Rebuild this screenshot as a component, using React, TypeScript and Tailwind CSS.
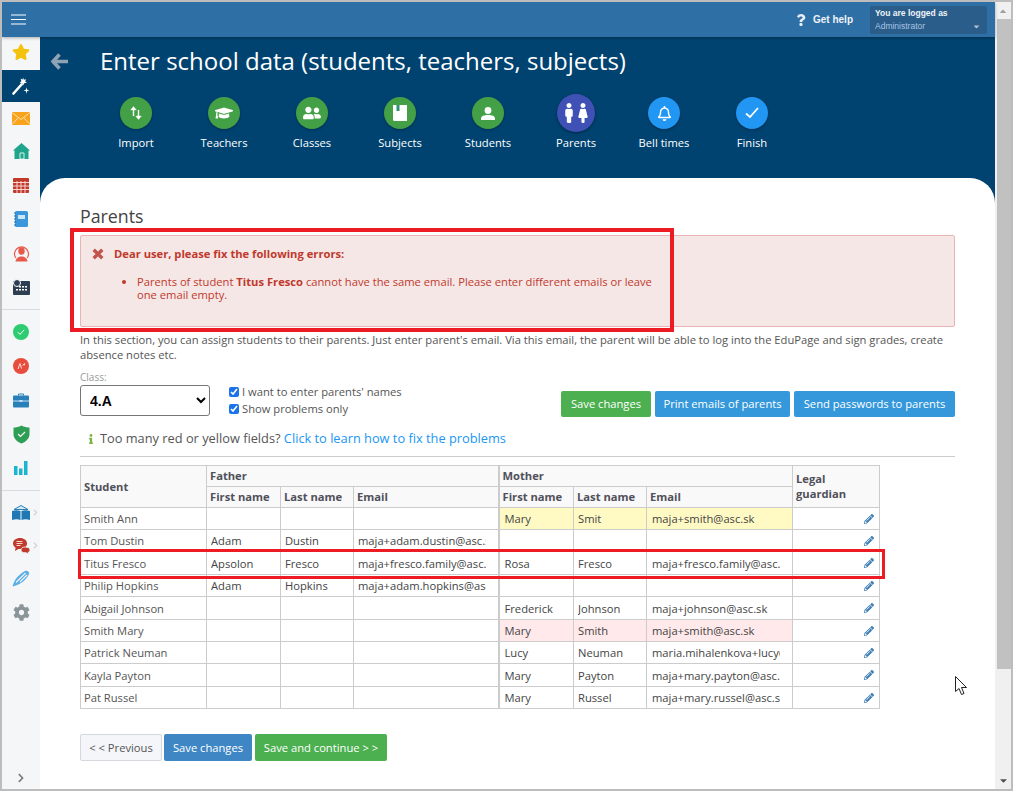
import React from "react";
import { FaStar, FaCog, FaChevronRight, FaGraduationCap, FaUserFriends, FaMale, FaFemale, FaRegBell, FaPencilAlt, FaInfo, FaQuestion, FaCaretDown, FaCaretUp } from "react-icons/fa";

const Shield = () => (
  <svg width="17" height="19" viewBox="0 0 17 19"><path d="M8.500 0.500C11 2 14 2.600 16.500 2.600V9c0 4.500-3.500 7.800-8 9.500C4 16.800.5 13.500.5 9V2.600C3 2.600 6 2 8.500.5z" fill="#2e9e55" /><path d="M5 9l2.500 2.500L12 7" stroke="#fff" strokeWidth="1.100" fill="none" /></svg>
);
const GridCal = () => (
  <svg width="16" height="15" viewBox="0 0 16 15"><rect width="16" height="15" fill="#c0392b" rx="1" /><g stroke="#f6d5cf" strokeWidth="1"><path d="M0 4.500h16M0 8h16M0 11.500h16M4 3v12M8 3v12M12 3v12" /></g></svg>
);
const Notebook = () => (
  <svg width="14" height="16" viewBox="0 0 14 16"><rect x="1" width="13" height="16" rx="1.500" fill="#3a97dc" /><rect x="4" y="4" width="7" height="4" fill="#cfe6f7" /><path d="M0 2h2M0 5h2M0 8h2M0 11h2M0 14h2" stroke="#1f6fa8" /></svg>
);
const PersonRing = () => (
  <svg width="17" height="17" viewBox="0 0 17 17"><path d="M2.800 13A7 7 0 1114.200 13" fill="none" stroke="#e8594a" strokeWidth="1.200" /><ellipse cx="8.500" cy="6" rx="3.200" ry="3.800" fill="#e8594a" /><path d="M2.500 16.500c.5-3.500 3-5 6-5s5.500 1.500 6 5z" fill="#e8594a" /></svg>
);
const DarkCal = () => (
  <svg width="17" height="16" viewBox="0 0 17 16"><rect y="2" width="17" height="14" rx="1" fill="#2c3e50" /><circle cx="4" cy="4" r="3.500" fill="#2c3e50" stroke="#fff" /><g fill="#fff"><rect x="6" y="7" width="2" height="1.500" /><rect x="9" y="7" width="2" height="1.500" /><rect x="12" y="7" width="2" height="1.500" /><rect x="6" y="10" width="2" height="1.500" /><rect x="9" y="10" width="2" height="1.500" /><rect x="12" y="10" width="2" height="1.500" /><rect x="3" y="10" width="2" height="1.500" /></g></svg>
);
const CheckDot = () => (
  <svg width="16" height="16" viewBox="0 0 16 16"><circle cx="8" cy="8" r="8" fill="#2ecc71" /><path d="M4.800 8.200l2.200 2.200 4.200-4.600" stroke="#fff" strokeWidth="1" fill="none" /></svg>
);
const GradeDot = () => (
  <svg width="16" height="16" viewBox="0 0 16 16"><circle cx="8" cy="8" r="8" fill="#e74c3c" /><path d="M5 11l2-5.500 1.500 5M9.500 7.500l2-2M11 7.500l.8-2" stroke="#fdd" strokeWidth="1" fill="none" /></svg>
);
const Briefcase = () => (
  <svg width="16" height="15" viewBox="0 0 16 15"><path d="M5.500 2.500V1h5v1.500" stroke="#2980b9" fill="none" /><rect y="2.500" width="16" height="12" rx="1" fill="#2980b9" /><path d="M0 8h16" stroke="#bfe0f5" /><rect x="6.500" y="7" width="3" height="2" fill="#bfe0f5" /></svg>
);
const Bars = () => (
  <svg width="14" height="14" viewBox="0 0 14 14" fill="#1cb5cf"><rect y="5" width="3.500" height="9" /><rect x="5" y="7.500" width="3.500" height="6.500" /><rect x="10" width="3.500" height="14" /></svg>
);
const House = () => (
  <svg width="17" height="16" viewBox="0 0 17 16"><path d="M8.500 0L17 7.500h-1.500V16h-14V7.500H0z" fill="#1fa58c" /><path d="M7 10h4v6H7z" fill="none" stroke="#d5f0ea" /></svg>
);
const BookCap = () => (
  <svg width="18" height="16" viewBox="0 0 18 16"><path d="M9 .5L16 4.500H2z" fill="#d7e9f5" stroke="#2980b9" /><path d="M0 6c3-1 6-1 8.500 0v9C6 14 3 14 0 15zM18 6c-3-1-6-1-8.500 0v9c2.500-1 5.500-1 8.500 0z" fill="#1f78b4" /></svg>
);
const Wand = () => (
  <svg width="18" height="18" viewBox="0 0 18 18"><path d="M1.500 16.500L9.500 7.500" stroke="#fff" strokeWidth="2.600" strokeLinecap="round" /><path d="M11 .5l.9 2.200 2.300-.4-1 2.100 1.700 1.500-2.400.2L11 8.500l-.9-2.400-2.400-.4 1.700-1.700-.9-2.200 2.200.7zM14.500 10.500l.7 2.300 2.300.6-2.300.7-.7 2.600-.7-2.600-2.300-.7 2.300-.6z" fill="#fff" /></svg>
);
const Mail = () => (
  <svg width="18" height="13" viewBox="0 0 18 13"><rect width="18" height="13" fill="#f9a21b" /><path d="M0 .5l9 7 9-7M0 12.500l6.500-7M18 12.500l-6.500-7" stroke="#fde2b0" strokeWidth="1" fill="none" /></svg>
);
const Chat = () => (
  <svg width="17" height="16" viewBox="0 0 17 16"><path d="M7 0c3.900 0 7 2.300 7 5.500S10.900 11 7 11c-.6 0-1.100 0-1.600-.1L2 13l.6-3.300C1 8.700 0 7.200 0 5.500 0 2.300 3.100 0 7 0z" fill="#c0392b" /><path d="M3.500 3.500h6M3.500 5.500h6M3.500 7.500h4" stroke="#f5d5d0" strokeWidth="1" /><path d="M12 9c2.800 0 5 1 5 3 0 1.200-.8 2-2 2.500l.5 1.500-2.500-1.300H12c-2.800 0-4-1.100-4-2.700 0-1.800 1.200-3 4-3z" fill="#c0392b" stroke="#f4f6f8" strokeWidth=".8" /></svg>
);
const Pen = () => (
  <svg width="18" height="17" viewBox="0 0 18 17"><path d="M0.500 16.500C2 10 6 5 13 1c2-1 4 .5 4.200 2.500C15 9 10 14 .5 16.500z" fill="#5aaee6" /><path d="M4 12.500L13.500 3M8 12L15 5" stroke="#f4f6f8" strokeWidth="1.100" /></svg>
);
const Arrows = () => (
  <svg width="12" height="14" viewBox="0 0 12 14" fill="none" stroke="#fff"><path d="M3.500 10V2M8.500 4v8" strokeWidth="1.400" /><path d="M0.700 4L3.500.5 6.300 4zM5.700 10l2.800 3.500 2.800-3.500z" fill="#fff" strokeWidth=".4" /></svg>
);
const NoteBook = () => (
  <svg width="14" height="16" viewBox="0 0 14 16"><path d="M0 0h14v16H1.500A1.500 1.500 0 010 14.500z" fill="#fff" /><rect x="3.500" y="0" width="3" height="6" fill="#2f8f74" /></svg>
);
const StudentIcon = () => (
  <svg width="14" height="13" viewBox="0 0 14 13" fill="#fff"><circle cx="7" cy="3.500" r="3.400" /><path d="M0 13v-1.500C0 9 3 8 7 8s7 1 7 3.500V13z" /></svg>
);
const Tick = () => (
  <svg width="14" height="12" viewBox="0 0 14 12"><path d="M1 6.500l4 3.500L13 1" stroke="#fff" strokeWidth="1.800" fill="none" /></svg>
);
const Back = () => (
  <svg width="17" height="17" viewBox="0 0 17 17" className="ml-[11px]"><path d="M8.500 1.500L2 8.500l6.500 7M3 8.500h14" stroke="#8fa3b5" strokeWidth="3.600" fill="none" /></svg>
);
const ErrX = () => (
  <svg width="12" height="12" viewBox="0 0 12 12"><path d="M1.700 1.700l8.600 8.600M10.300 1.700l-8.600 8.600" stroke="#c0564b" strokeWidth="3.400" /></svg>
);

const sideA = [<House />, <GridCal />, <Notebook />, <PersonRing />, <DarkCal />];
const sideB = [<CheckDot />, <GradeDot />, <Briefcase />, <Shield />, <Bars />];
const Side = ({ children, h = "h-[34px]", more }: { children: React.ReactNode; h?: string; more?: boolean }) => (
  <div className={`${h} relative flex items-center justify-center`}>
    {children}
    {more ? <FaChevronRight size={7} color="#d0d0d0" className="absolute right-[1px] top-[13px]" /> : null}
  </div>
);

const steps: [string, React.ReactNode, string][] = [
  ["Import", <Arrows />, "g"],
  ["Teachers", <FaGraduationCap size={18} color="#fff" />, "g"],
  ["Classes", <FaUserFriends size={18} color="#fff" />, "g"],
  ["Subjects", <NoteBook />, "g"],
  ["Students", <StudentIcon />, "g"],
  ["Parents", <span className="flex -space-x-[6px]"><FaMale size={20} color="#fff" /><FaFemale size={20} color="#fff" /></span>, "p"],
  ["Bell times", <FaRegBell size={15} color="#fff" />, "b"],
  ["Finish", <Tick />, "b"],
];

type Row = { s: string; f?: [string, string, string]; m?: [string, string, string]; tone?: string; h: string };
const rows: Row[] = [
  { s: "Smith Ann", m: ["Mary", "Smit", "maja+smith@asc.sk"], tone: "bg-[#fff9c4]", h: "h-[22px]" },
  { s: "Tom Dustin", f: ["Adam", "Dustin", "maja+adam.dustin@asc.sk"], h: "h-[22px]" },
  { s: "Titus Fresco", f: ["Apsolon", "Fresco", "maja+fresco.family@asc.sk"], m: ["Rosa", "Fresco", "maja+fresco.family@asc.sk"], h: "h-[23px]" },
  { s: "Philip Hopkins", f: ["Adam", "Hopkins", "maja+adam.hopkins@asc.sk"], h: "h-[22px]" },
  { s: "Abigail Johnson", m: ["Frederick", "Johnson", "maja+johnson@asc.sk"], h: "h-[23px]" },
  { s: "Smith Mary", m: ["Mary", "Smith", "maja+smith@asc.sk"], tone: "bg-[#ffe9ea]", h: "h-[22px]" },
  { s: "Patrick Neuman", m: ["Lucy", "Neuman", "maria.mihalenkova+lucy@asc.sk"], h: "h-[22px]" },
  { s: "Kayla Payton", m: ["Mary", "Payton", "maja+mary.payton@asc.sk"], h: "h-[23px]" },
  { s: "Pat Russel", m: ["Mary", "Russel", "maja+mary.russel@asc.sk"], h: "h-[22px]" },
];

const Th = ({ children, className = "", ...p }: any) => (
  <th {...p} className={`border border-[#ccc] bg-[#f9f9f9] px-[3px] pb-[2px] text-left align-middle text-[11.200px] leading-[15px] font-bold text-[#50505a] ${className}`}>{children}</th>
);
const Cell = ({ v, tone, thick, email, ml = "ml-[4px]" }: { v?: string; tone?: string; thick?: boolean; email?: boolean; ml?: string }) => (
  <td className={`border border-[#ccc] p-0 pt-[2px] text-[11.200px] text-[#444] ${tone ?? ""} ${thick ? "border-l-[2px]" : ""}`}>
    <div className={`overflow-hidden whitespace-nowrap ${thick ? "ml-[5px]" : ml} ${email ? "w-[128px]" : ""}`}>{v ?? "\u00a0"}</div>
  </td>
);

export default function App() {
  return (
    <div className="relative flex h-[791px] w-[1013px] flex-col overflow-hidden border-2 border-[#bdbdbd] font-['Open_Sans',sans-serif] text-[#555]">
      <div className="flex min-h-0 flex-1">
        <div className="flex min-w-0 flex-1 flex-col">
          <header className="z-10 flex h-[35px] shrink-0 items-center bg-[#2e70a6] pr-[8px] shadow-[0_1px_3px_rgba(0,0,0,.3)]">
            <svg width="15" height="11" viewBox="0 0 15 11" className="ml-[9px]"><path d="M0 1h15M0 5.500h15M0 10h15" stroke="#fff" strokeWidth="1.200" /></svg>
            <div className="ml-auto flex items-center">
              <FaQuestion size={12} color="#e8eef4" />
              <span className="ml-[6px] font-['Liberation_Sans',sans-serif] text-[10px] font-bold text-[#eef3f8]">Get help</span>
              <div className="ml-[17px] flex h-[28px] w-[117px] flex-col justify-center rounded-[2px] bg-[#2a5d8a] pl-[5px] font-['Liberation_Sans',sans-serif] text-[8.500px] leading-[13px]">
                <span className="font-bold text-[#eef3f8]">You are logged as</span>
                <span className="flex items-center justify-between pr-[6px] text-[#a9c4e4]">Administrator<FaCaretDown size={9} color="#b0c0d0" /></span>
              </div>
            </div>
          </header>
          <div className="flex min-h-0 flex-1">
            <aside className="flex w-[38px] shrink-0 flex-col bg-[#f4f6f8] shadow-[1px_0_2px_rgba(0,0,0,.1)]">
              <Side h="h-[33px] pb-[3px]"><FaStar size={18} color="#f4c20d" /></Side>
              <Side h="h-[32px] bg-[#004370]"><Wand /></Side>
              <Side h="h-[32px]"><Mail /></Side>
              {sideA.map((x, i) => <Side key={i}>{x}</Side>)}
              <div className="my-[5px] h-px bg-[#d8dcdf]" />
              {sideB.map((x, i) => <Side key={i}>{x}</Side>)}
              <div className="my-[5px] h-px bg-[#d8dcdf]" />
              <Side h="h-[33px]" more><BookCap /></Side>
              <Side h="h-[33px]" more><Chat /></Side>
              <Side h="h-[33px]"><Pen /></Side>
              <Side h="h-[34px]"><FaCog size={17} color="#8a9499" /></Side>
              <div className="mt-auto mb-[1px] flex h-[20px] items-center justify-center"><FaChevronRight size={10} color="#7a7a7a" /></div>
            </aside>
            <main className="flex min-w-0 flex-1 flex-col bg-[#004370]">
              <section className="h-[141px] shrink-0">
                <div className="flex h-[48px] items-center">
                  <Back />
                  <h1 className="ml-[32px] pb-[1px] text-[24px] leading-[32px] font-normal text-white">Enter school data (students, teachers, subjects)</h1>
                </div>
                <div className="mt-[9px] ml-[52px] flex">
                  {steps.map(([label, icon, k]) => (
                    <div key={label} className="flex w-[88px] flex-col items-center">
                      <div className="flex h-[38px] items-center justify-center">
                        <div className={k === "p" ? "flex h-[38px] w-[38px] items-center justify-center rounded-full bg-[#3f51b5] shadow-[0_1px_3px_rgba(0,0,0,.4)]" : k === "g" ? "flex h-[32px] w-[32px] items-center justify-center rounded-full bg-[#43a047] shadow-[0_1px_3px_rgba(0,0,0,.3)]" : "flex h-[32px] w-[32px] items-center justify-center rounded-full bg-[#2196f3] shadow-[0_1px_3px_rgba(0,0,0,.3)]"}>{icon}</div>
                      </div>
                      <span className="mt-[2px] text-[11.200px] leading-[18px] text-white">{label}</span>
                    </div>
                  ))}
                </div>
              </section>
              <section className="min-h-0 flex-1 rounded-t-[25px] bg-white px-[40px]">
                <h2 className="pt-[26px] pb-[1px] text-[17.800px] leading-[24px] font-normal text-[#444]">Parents</h2>
                <div className="mt-[6px] h-[92px] rounded-[2px] border border-[#e8b4b4] bg-[#f6e7e7] pt-[9px] pl-[11px] text-[11.200px] text-[#c0392b]">
                  <div className="flex items-center leading-[18px] font-bold">
                    <ErrX />
                    <span className="ml-[10px]">Dear user, please fix the following errors:</span>
                  </div>
                  <ul className="mt-[12px] ml-[45px] w-[525px] list-disc leading-[13px]">
                    <li>Parents of student <b>Titus Fresco</b> cannot have the same email. Please enter different emails or leave one email empty.</li>
                  </ul>
                </div>
                <p className="mt-[5px] text-[11.200px] leading-[15px]">In this section, you can assign students to their parents. Just enter parent's email. Via this email, the parent will be able to log into the EduPage and sign grades, create absence notes etc.</p>
                <div className="mt-[9px] flex items-end">
                  <div className="flex flex-col">
                    <label className="text-[10px] leading-[13px] text-[#999]">Class:</label>
                    <select defaultValue="4.A" className="mt-[1px] h-[31px] w-[130px] appearance-auto rounded-[3px] border border-[#767676] bg-white pl-[5px] font-['Liberation_Sans',sans-serif] text-[14px] font-bold text-black">
                      <option>4.A</option>
                    </select>
                  </div>
                  <div className="mb-[-1px] ml-[19px] flex flex-col text-[11.200px] leading-[17px]">
                    <label className="flex items-center"><input type="checkbox" defaultChecked className="mr-[3px] h-[10px] w-[10px] accent-[#1a73e8]" />I want to enter parents' names</label>
                    <label className="flex items-center"><input type="checkbox" defaultChecked className="mr-[3px] h-[10px] w-[10px] accent-[#1a73e8]" />Show problems only</label>
                  </div>
                  <div className="mb-[-1px] ml-auto flex gap-[4px] text-[11.200px] text-white">
                    <button className="h-[26px] w-[90px] rounded-[2px] bg-[#4caf50] pt-[1px]">Save changes</button>
                    <button className="h-[26px] w-[135px] rounded-[2px] bg-[#3498db] pt-[1px]">Print emails of parents</button>
                    <button className="h-[26px] w-[161px] rounded-[2px] bg-[#3498db] pt-[1px]">Send passwords to parents</button>
                  </div>
                </div>
                <div className="mt-[13px] flex h-[20px] items-center pl-[6px] text-[12.800px]">
                  <FaInfo size={10} color="#7cb342" />
                  <span className="ml-[4px] text-[#555]">Too many red or yellow fields? <a className="text-[#2196f3]">Click to learn how to fix the problems</a></span>
                </div>
                <div className="mt-[7px] h-px bg-[#ccc]" />
                <table className="mt-[8px] w-[799px] table-fixed border-collapse">
                  <colgroup>
                    <col className="w-[126px]" /><col className="w-[74px]" /><col className="w-[73px]" /><col className="w-[145px]" /><col className="w-[75px]" /><col className="w-[73px]" /><col className="w-[146px]" /><col className="w-[87px]" />
                  </colgroup>
                  <thead>
                    <tr className="h-[21px]">
                      <Th rowSpan={2}><span className="block pt-[2px]">Student</span></Th>
                      <Th colSpan={3}>Father</Th>
                      <Th colSpan={3} className="border-l-[2px]">Mother</Th>
                      <Th rowSpan={2}>Legal guardian</Th>
                    </tr>
                    <tr className="h-[21px]">
                      <Th>First name</Th><Th>Last name</Th><Th>Email</Th>
                      <Th className="border-l-[2px]">First name</Th><Th>Last name</Th><Th>Email</Th>
                    </tr>
                  </thead>
                  <tbody>
                    {rows.map((r) => (
                      <tr key={r.s} className={r.h}>
                        <td className="border border-[#ccc] px-[3px] pt-[2px] text-[11.200px] text-[#555]">{r.s}</td>
                        <Cell v={r.f?.[0]} /><Cell v={r.f?.[1]} /><Cell v={r.f?.[2]} email />
                        <Cell v={r.m?.[0]} tone={r.tone} thick /><Cell v={r.m?.[1]} tone={r.tone} /><Cell v={r.m?.[2]} tone={r.tone} email ml="ml-[5px]" />
                        <td className="border border-[#ccc] pr-[5px]"><div className="flex justify-end"><FaPencilAlt size={10} color="#3f7fb5" /></div></td>
                      </tr>
                    ))}
                  </tbody>
                </table>
                <div className="mt-[25px] flex text-[11.200px]">
                  <button className="h-[27px] w-[82px] rounded-[2px] border border-[#d5d9de] bg-[#f4f6f9] pt-[1px] text-[#555]">&lt; &lt; Previous</button>
                  <button className="ml-[2px] h-[27px] w-[88px] rounded-[2px] bg-[#3f87c4] pt-[1px] text-white">Save changes</button>
                  <button className="ml-[3px] h-[27px] w-[132px] rounded-[2px] bg-[#4caf50] pt-[1px] text-white">Save and continue &gt; &gt;</button>
                </div>
              </section>
            </main>
          </div>
        </div>
        <div className="flex w-[16px] shrink-0 flex-col items-center bg-[#f0f0f0]">
          <div className="flex h-[17px] items-center justify-center"><FaCaretUp size={10} color="#a0a0a0" /></div>
          <div className="ml-[2px] h-[650px] w-[14px] bg-[#c1c1c1]" />
          <div className="mt-auto flex h-[17px] items-center justify-center"><FaCaretDown size={11} color="#505050" /></div>
        </div>
      </div>
      <div className="pointer-events-none absolute left-[68px] top-[226px] h-[104px] w-[604px] border-[4px] border-[#ed1c24]" />
      <div className="pointer-events-none absolute left-[76px] top-[547px] h-[30px] w-[807px] border-[3.500px] border-[#ed1c24]" />
      <svg className="absolute left-[953px] top-[674px]" width="13" height="19" viewBox="0 0 13 19"><path d="M.5.5v15l3.500-3 2.500 6 2.500-1-2.500-6h5z" fill="#fff" stroke="#222" /></svg>
    </div>
  );
}
